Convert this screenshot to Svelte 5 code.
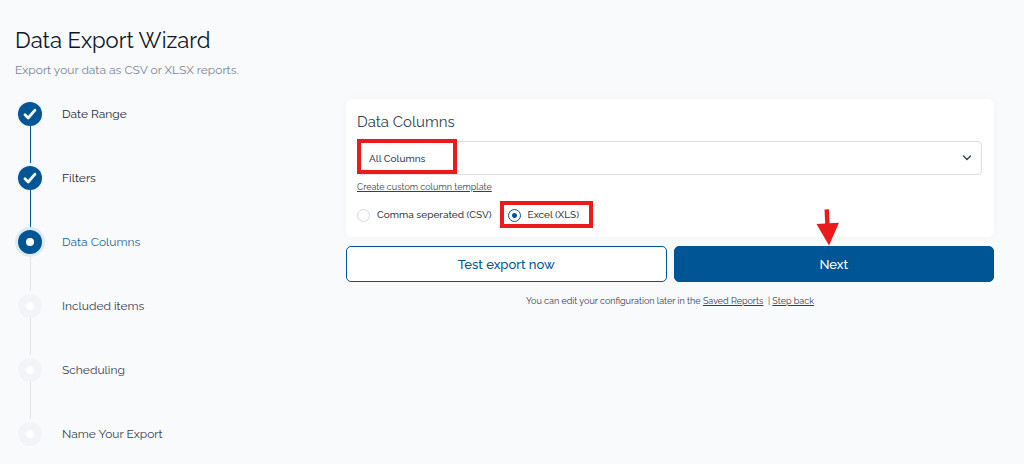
<script>
  const steps = [
    { label: "Date Range", state: "done" },
    { label: "Filters", state: "done" },
    { label: "Data Columns", state: "current" },
    { label: "Included items", state: "todo" },
    { label: "Scheduling", state: "todo" },
    { label: "Name Your Export", state: "todo" },
  ];

  let columns = "all";
  let format = "xls";
</script>

<style>
  :global(body) {
    background: #f9fafc;
  }

  .wizard {
    padding: 26px 30px 0 15px;
    font-family: Raleway, Lato, sans-serif;
    color: #374151;
  }

  h1 {
    margin: 0;
    font-size: 22px;
    line-height: 28px;
    font-weight: 400;
    color: #0d1629;
  }

  .intro {
    margin: 7px 0 20px;
    font-size: 12px;
    line-height: 18px;
    color: #7c8595;
  }

  .layout {
    display: grid;
    grid-template-columns: 1fr 2fr;
    gap: 7px;
    align-items: start;
  }

  ol {
    margin: 0;
    padding: 0;
    list-style: none;
  }

  li {
    display: flex;
    gap: 17px;
    height: 64px;
    font-size: 12px;
    line-height: 30px;
  }

  li:last-child {
    height: 30px;
  }

  .track {
    display: flex;
    flex-direction: column;
    align-items: center;
    width: 30px;
    padding-top: 3px;
  }

  .dot {
    display: flex;
    align-items: center;
    justify-content: center;
    width: 24px;
    height: 24px;
    border-radius: 50%;
    background: #f3f4f8;
  }

  .dot i {
    width: 8px;
    height: 8px;
    border-radius: 50%;
    background: #fff;
  }

  .line {
    flex: 1;
    width: 1px;
    background: #e3e4e9;
  }

  .done .dot,
  .done .line,
  .current .dot {
    background: #005694;
  }

  .done .dot {
    box-shadow: 0 0 0 2px #f1f5fa;
  }

  .current .dot {
    box-shadow: 0 0 0 3px #dfe9f2;
  }

  .done {
    color: #1f2937;
  }

  .current {
    color: #1a669f;
  }

  .card {
    padding: 10px 12px 12px 11px;
    border-radius: 6px;
    background: #fff;
    box-shadow: 0 0 10px rgba(30, 50, 80, 0.03);
  }

  h2 {
    margin: 0 0 6px;
    font-size: 15px;
    line-height: 26px;
    font-weight: 400;
  }

  .select {
    position: relative;
    display: flex;
    align-items: center;
  }

  select {
    appearance: none;
    width: 100%;
    height: 34px;
    padding: 0 11px;
    border: 1px solid #dcdde6;
    border-radius: 4px;
    background: #fff;
    font: inherit;
    font-size: 10px;
    font-weight: 500;
    color: #374151;
  }

  .chevron {
    position: absolute;
    right: 10px;
    pointer-events: none;
  }

  a {
    color: #374151;
    text-decoration: underline;
  }

  .template {
    display: block;
    width: fit-content;
    margin-top: 5px;
    font-size: 9px;
    line-height: 14px;
  }

  .formats {
    display: flex;
    gap: 16px;
    margin-top: 11px;
    font-size: 10px;
    line-height: 20px;
    font-weight: 500;
  }

  .formats label {
    position: relative;
    display: flex;
    align-items: center;
    gap: 7px;
  }

  input {
    appearance: none;
    width: 13px;
    height: 13px;
    margin: 0;
    border: 1px solid #d5d8e0;
    border-radius: 50%;
    background: #fff;
  }

  input:checked {
    border-color: #005694;
    background: radial-gradient(circle, #005694 2px, #fff 3px);
  }

  .mark {
    position: absolute;
    box-sizing: border-box;
    border: 4px solid #ea1a1d;
    pointer-events: none;
  }

  .mark-select {
    top: -2px;
    left: 0;
    width: 100px;
    height: 35px;
  }

  .mark-radio {
    inset: -4px -14px -3px -8px;
  }

  .actions {
    display: grid;
    grid-template-columns: 1fr 1fr;
    gap: 7px;
    margin-top: 9px;
  }

  button {
    position: relative;
    height: 36px;
    border: 1px solid #005694;
    border-radius: 5px;
    background: #fff;
    font: inherit;
    font-size: 13px;
    font-weight: 500;
    color: #005694;
  }

  .primary {
    background: #005694;
    color: #fff;
  }

  .arrow {
    position: absolute;
    left: calc(50% - 18px);
    bottom: 35px;
    pointer-events: none;
  }

  .note {
    margin: 12px 0 0;
    font-size: 9px;
    line-height: 14px;
    text-align: center;
  }
</style>

<main class="wizard">
  <h1>Data Export Wizard</h1>
  <p class="intro">Export your data as CSV or XLSX reports.</p>

  <div class="layout">
    <ol>
      {#each steps as step, i}
        <li class={step.state}>
          <div class="track">
            <span class="dot">
              {#if step.state === "done"}
                <svg width="14" height="14" viewBox="0 0 14 14" fill="none">
                  <path d="M2 7.8L5.2 11L12 3.2" stroke="#fff" stroke-width="2.8" stroke-linecap="round" stroke-linejoin="round" />
                </svg>
              {:else}
                <i></i>
              {/if}
            </span>
            {#if i < steps.length - 1}
              <span class="line"></span>
            {/if}
          </div>
          <span>{step.label}</span>
        </li>
      {/each}
    </ol>

    <section>
      <div class="card">
        <h2>Data Columns</h2>
        <div class="select">
          <select aria-label="Data Columns" bind:value={columns}>
            <option value="all">All Columns</option>
          </select>
          <svg class="chevron" width="10" height="8" viewBox="0 0 10 8" fill="none">
            <path d="M1.5 2L5 5.5L8.5 2" stroke="#374151" stroke-width="1.4" stroke-linecap="round" stroke-linejoin="round" />
          </svg>
          <span class="mark mark-select"></span>
        </div>
        <a class="template" href="#template">Create custom column template</a>
        <div class="formats">
          <label>
            <input type="radio" name="format" value="csv" bind:group={format} />
            Comma seperated (CSV)
          </label>
          <label>
            <input type="radio" name="format" value="xls" bind:group={format} />
            Excel (XLS)
            <span class="mark mark-radio"></span>
          </label>
        </div>
      </div>

      <div class="actions">
        <button type="button">Test export now</button>
        <button type="button" class="primary">
          Next
          <svg class="arrow" width="24" height="37" viewBox="0 0 24 37">
            <path d="M8.5 .5L13 .3L13.5 14.2L23 13.8L13 36.5L.5 15L9.2 14.4Z" fill="#ea1a1d" />
          </svg>
        </button>
      </div>

      <p class="note">
        You can edit your configuration later in the <a href="#reports">Saved Reports</a>&nbsp; | <a href="#back">Step back</a>
      </p>
    </section>
  </div>
</main>
